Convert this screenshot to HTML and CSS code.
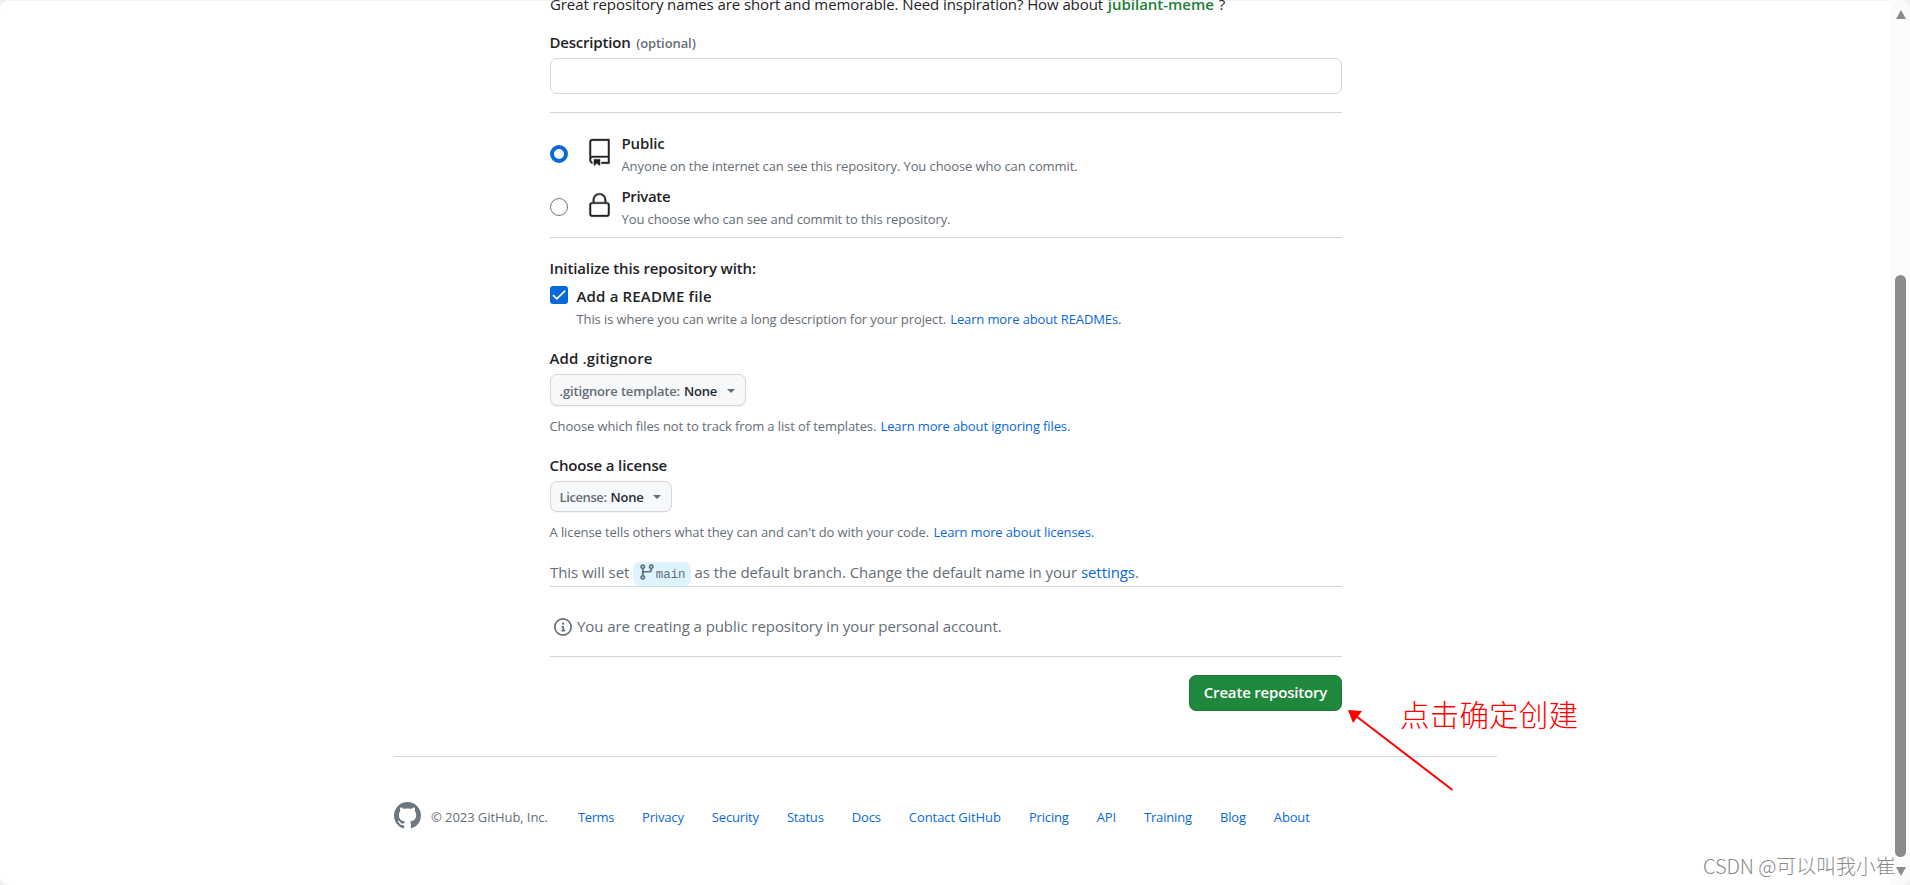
FILE: index.html
```
<!DOCTYPE html>
<html lang="en">
<head>
    <meta charset="UTF-8">
    <title>Create a new repository</title>
    <link rel="stylesheet" href="styles.css">
</head>

<body>
    <div class="page">
        <div class="view">
            <form class="new-repo">
                <p class="hint">Great repository names are short and memorable. Need inspiration? How about <strong class="suggestion">jubilant-meme</strong> ?</p>

                <div class="field">
                    <label class="title" for="description">Description <span class="optional">(optional)</span></label>
                    <input class="text-input" id="description" type="text">
                </div>

                <div class="line line-input"></div>

                <div class="visibility">
                    <label class="option">
                        <input class="radio" type="radio" name="visibility" checked>
                        <svg class="option-icon" width="27" height="27" viewBox="0 0 24 24"><path d="M3 2.75A2.75 2.75 0 0 1 5.75 0h14.5a.75.75 0 0 1 .75.75v20.5a.75.75 0 0 1-.75.75h-6a.75.75 0 0 1 0-1.5h5.25v-4H6A1.5 1.5 0 0 0 4.5 18v.75c0 .716.43 1.334 1.05 1.605a.75.75 0 0 1-.6 1.374A3.251 3.251 0 0 1 3 18.75ZM19.5 1.5H5.75c-.69 0-1.25.56-1.25 1.25v12.651A2.989 2.989 0 0 1 6 15h13.5Z"/><path d="M7 18.25a.25.25 0 0 1 .25-.25h5a.25.25 0 0 1 .25.25v5.01a.25.25 0 0 1-.397.201l-2.206-1.604a.25.25 0 0 0-.294 0L7.397 23.46a.25.25 0 0 1-.397-.2v-5.01Z"/></svg>
                        <span class="option-text">
                            <span class="title">Public</span>
                            <span class="note">Anyone on the internet can see this repository. You choose who can commit.</span>
                        </span>
                    </label>
                    <label class="option">
                        <input class="radio" type="radio" name="visibility">
                        <svg class="option-icon" width="27" height="27" viewBox="0 0 24 24"><path d="M6 9V7.25C6 3.845 8.503 1 12 1s6 2.845 6 6.25V9h.5a2.5 2.5 0 0 1 2.5 2.5v8a2.5 2.5 0 0 1-2.5 2.5h-13A2.5 2.5 0 0 1 3 19.5v-8A2.5 2.5 0 0 1 5.5 9Zm-1.5 2.5v8a1 1 0 0 0 1 1h13a1 1 0 0 0 1-1v-8a1 1 0 0 0-1-1h-13a1 1 0 0 0-1 1Zm3-4.25V9h9V7.25c0-2.67-1.922-4.75-4.5-4.75-2.578 0-4.5 2.08-4.5 4.75Z"/></svg>
                        <span class="option-text">
                            <span class="title title-private">Private</span>
                            <span class="note">You choose who can see and commit to this repository.</span>
                        </span>
                    </label>
                </div>

                <div class="line"></div>

                <div class="init">
                    <h2 class="title">Initialize this repository with:</h2>
                    <label class="readme">
                        <span class="checkbox">
                            <svg width="18" height="18" viewBox="0 0 18 18"><path d="M3 9.2 6.8 12.9 15.2 4.6"/></svg>
                        </span>
                        <span class="readme-text">
                            <span class="title title-readme">Add a README file</span>
                            <span class="note">This is where you can write a long description for your project. <a href="#">Learn more about READMEs.</a></span>
                        </span>
                    </label>
                </div>

                <div class="gitignore">
                    <h2 class="title title-gitignore">Add .gitignore</h2>
                    <button class="select" type="button">.gitignore template: <b>None</b><i class="caret"></i></button>
                    <p class="note">Choose which files not to track from a list of templates. <a href="#">Learn more about ignoring files.</a></p>
                </div>

                <div class="license">
                    <h2 class="title">Choose a license</h2>
                    <button class="select select-license" type="button"><span class="tight">License:</span> <b>None</b><i class="caret"></i></button>
                    <p class="note">A license tells others what they can and can't do with your code. <a href="#">Learn more about licenses.</a></p>
                </div>

                <p class="branch-info">This will set <span class="branch"><svg width="18" height="18" viewBox="0 0 16 16"><path d="M9.5 3.25a2.25 2.25 0 1 1 3 2.122V6A2.5 2.5 0 0 1 10 8.5H6a1 1 0 0 0-1 1v1.128a2.251 2.251 0 1 1-1.5 0V5.372a2.25 2.25 0 1 1 1.5 0v1.836A2.493 2.493 0 0 1 6 7h4a1 1 0 0 0 1-1v-.628A2.25 2.25 0 0 1 9.5 3.25Zm-6 0a.75.75 0 1 0 1.5 0 .75.75 0 0 0-1.5 0Zm8.25-.75a.75.75 0 1 0 0 1.5.75.75 0 0 0 0-1.5ZM4.25 12a.75.75 0 1 0 0 1.5.75.75 0 0 0 0-1.5Z"/></svg>main</span> <span>as the default branch. Change the default name in your <a href="#">settings</a>.</span></p>

                <div class="line"></div>

                <p class="account-info"><svg width="18" height="18" viewBox="0 0 16 16"><path d="M0 8a8 8 0 1 1 16 0A8 8 0 0 1 0 8Zm8-6.5a6.5 6.5 0 1 0 0 13 6.5 6.5 0 0 0 0-13ZM6.5 7.75A.75.75 0 0 1 7.25 7h1a.75.75 0 0 1 .75.75v2.75h.25a.75.75 0 0 1 0 1.5h-2a.75.75 0 0 1 0-1.5h.25v-2h-.25a.75.75 0 0 1-.75-.75ZM8 6a1 1 0 1 1 0-2 1 1 0 0 1 0 2Z"/></svg>You are creating a public repository in your personal account.</p>

                <div class="line"></div>

                <div class="actions">
                    <button class="create" type="button">Create repository</button>
                </div>
            </form>

            <footer class="footer">
                <svg class="logo" width="27" height="27" viewBox="0 0 16 16"><path d="M8 0C3.58 0 0 3.58 0 8c0 3.54 2.29 6.53 5.47 7.59.4.07.55-.17.55-.38 0-.19-.01-.82-.01-1.49-2.01.37-2.53-.49-2.69-.94-.09-.23-.48-.94-.82-1.13-.28-.15-.68-.52-.01-.53.63-.01 1.08.58 1.23.82.72 1.21 1.87.87 2.33.66.07-.52.28-.87.51-1.07-1.78-.2-3.64-.89-3.64-3.95 0-.87.31-1.59.82-2.15-.08-.2-.36-1.02.08-2.12 0 0 .67-.21 2.2.82.64-.18 1.32-.27 2-.27.68 0 1.36.09 2 .27 1.53-1.04 2.2-.82 2.2-.82.44 1.1.16 1.92.08 2.12.51.56.82 1.27.82 2.15 0 3.07-1.87 3.75-3.65 3.95.29.25.54.73.54 1.48 0 1.07-.01 1.93-.01 2.2 0 .21.15.46.55.38A8.01 8.01 0 0 0 16 8c0-4.42-3.58-8-8-8Z"/></svg>
                <span class="copyright">© 2023 GitHub, Inc.</span>
                <nav class="links">
                    <a class="tight" href="#">Terms</a>
                    <a href="#">Privacy</a>
                    <a href="#">Security</a>
                    <a href="#">Status</a>
                    <a href="#">Docs</a>
                    <a class="contact" href="#">Contact GitHub</a>
                    <a href="#">Pricing</a>
                    <a href="#">API</a>
                    <a href="#">Training</a>
                    <a href="#">Blog</a>
                    <a href="#">About</a>
                </nav>
            </footer>
        </div>

        <div class="scrollbar">
            <i class="arrow-up"></i>
            <i class="thumb"></i>
            <i class="arrow-down"></i>
        </div>
    </div>

    <svg class="pointer" width="110" height="90" viewBox="0 0 110 90"><path class="pointer-line" d="M8 6 104.500 80"/><path class="pointer-head" d="M0 0 14 1 5 13Z"/></svg>
    <div class="callout" lang="zh">点击确定创建</div>
    <div class="watermark" lang="zh">CSDN @可以叫我小崔</div>
</body>
</html>
```
FILE: styles.css
```
* {
    box-sizing: border-box;
}

body {
    margin: 0;
    height: 885px;
    overflow: hidden;
    position: relative;
    background: #f0f0f0;
    color: #1f2328;
    font: 15px/24px "Open Sans", "Noto Sans", sans-serif;
    letter-spacing: -0.07px;
    white-space: nowrap;
}

h2,
p {
    margin: 0;
}

a {
    color: #0969da;
    text-decoration: none;
}

svg {
    display: block;
    fill: currentColor;
}

.page {
    display: flex;
    height: 885px;
    overflow: hidden;
    border-radius: 9px;
    background: #fff;
    box-shadow: inset 0 1px 0 #f4f4f4;
}

.view {
    width: 1891px;
    overflow: hidden;
}

/* form */
.new-repo {
    width: 792px;
    margin: -8px 0 0 550px;
}

.hint {
    letter-spacing: -0.09px;
}

.title {
    display: block;
    font-size: 15px;
    font-weight: 600;
    line-height: 24px;
    letter-spacing: -0.13px;
    text-indent: -0.5px;
}

.note {
    display: block;
    color: #656d76;
    font-size: 13px;
    line-height: 22px;
    letter-spacing: -0.1px;
    text-indent: -0.5px;
}

.note a {
    margin-left: 1px;
    letter-spacing: -0.13px;
}

.line {
    height: 1px;
    background: #d0d7de;
}

.suggestion {
    margin: 0 1px;
    color: #1a7f37;
    font-weight: 600;
    letter-spacing: -0.02px;
}

.field {
    margin-top: 14px;
}

.field .title {
    letter-spacing: -0.2px;
}

.optional {
    margin-left: 2px;
    color: #656d76;
    font-size: 13px;
    line-height: 1;
    letter-spacing: -0.09px;
}

.text-input {
    display: block;
    width: 100%;
    height: 36px;
    margin-top: 4px;
    padding: 0 12px;
    border: 1px solid #d0d7de;
    border-radius: 7px;
    background: #fff;
}

.line-input {
    margin-top: 18px;
}

.visibility {
    margin-top: 18px;
}

.option {
    display: flex;
    height: 46px;
    margin-bottom: 7px;
}

.radio {
    appearance: none;
    width: 18px;
    height: 18px;
    margin: 14px 18px 0 0;
    border: 1px solid #6e7781;
    border-radius: 50%;
    background: #fff;
}

.radio:checked {
    border: 4.5px solid #0969da;
}

.option-icon {
    margin: 8px 9px 0 0;
    overflow: visible;
    stroke: currentColor;
    stroke-width: 0.3;
}

.title-private {
    letter-spacing: -0.35px;
}

.init {
    margin-top: 18px;
}

.readme {
    display: flex;
    margin-top: 4px;
}

.checkbox {
    width: 18px;
    height: 18px;
    margin: 2px 9px 0 0;
    border-radius: 3px;
    background: #0969da;
}

.checkbox path {
    fill: none;
    stroke: #fff;
    stroke-width: 1.7;
}

.title-readme {
    letter-spacing: 0.16px;
}

.gitignore {
    margin-top: 16px;
}

.title-gitignore {
    letter-spacing: 0.12px;
}

.select {
    display: flex;
    align-items: center;
    width: 196px;
    height: 32px;
    margin: 4px 0 9px;
    padding: 1px 8.5px 0;
    border: 1px solid #d4d7da;
    border-radius: 7px;
    background: #f6f8fa;
    color: #656d76;
    font: 600 13px/20px "Open Sans", "Noto Sans", sans-serif;
    letter-spacing: -0.15px;
    box-shadow: 0 1px 0 rgba(31, 35, 40, 0.04);
}

.select b {
    margin-left: 4px;
    color: #24292f;
    font-weight: 600;
    letter-spacing: -0.2px;
}

.caret {
    margin-left: 9.5px;
    border: 4.5px solid transparent;
    border-top-color: #656d76;
    border-bottom: 0;
}

.license {
    margin-top: 16px;
}

.select-license {
    width: 122px;
    height: 31px;
}

.tight {
    letter-spacing: -0.4px;
}

.branch-info {
    display: flex;
    height: 26px;
    margin-top: 17px;
    color: #656d76;
    letter-spacing: -0.06px;
}

.branch {
    display: flex;
    height: 24px;
    margin: 2px 4px 0 3.5px;
    padding: 0 5px;
    border-radius: 7px;
    background: #ddf4ff;
    font: 12.4px/27px "Liberation Mono", monospace;
    letter-spacing: 0;
}

.branch svg {
    margin-top: 1px;
}

.account-info {
    display: flex;
    margin: 27px 0 18px;
    padding-left: 4px;
    color: #656d76;
}

.account-info svg {
    margin: 4px 5px 0 0;
}

.actions {
    display: flex;
    justify-content: flex-end;
    margin-top: 18px;
}

.create {
    width: 153px;
    height: 36px;
    padding: 0 0 2px;
    border: 1px solid #1c7b37;
    border-radius: 7px;
    background: #1f883d;
    color: #fff;
    font: 600 15px/24px "Open Sans", "Noto Sans", sans-serif;
    letter-spacing: -0.18px;
}

/* footer */
.footer {
    display: flex;
    width: 1103px;
    height: 100px;
    margin: 45px 0 0 394px;
    padding-top: 45px;
    border-top: 1px solid #d0d7de;
    color: #656d76;
    font-size: 13px;
    line-height: 20px;
}

.logo {
    color: #6e7781;
}

.copyright {
    width: 147px;
    margin: 5px 0 0 10px;
}

.links {
    display: flex;
    gap: 28px;
    margin-top: 5px;
    letter-spacing: -0.16px;
}

.contact {
    letter-spacing: -0.06px;
}

/* browser scrollbar */
.scrollbar {
    display: flex;
    flex-direction: column;
    align-items: center;
    width: 19px;
    padding: 10px 0 8px;
    background: #fbfbfb;
}

.thumb {
    width: 11px;
    height: 582px;
    margin: 256px 0 10px;
    border-radius: 6px;
    background: #8b8b8b;
}

.arrow-up,
.arrow-down {
    border: 5.5px solid transparent;
}

.arrow-up {
    border-top: 0;
    border-bottom: 9px solid #8b8b8b;
}

.arrow-down {
    border-top: 9px solid #8b8b8b;
    border-bottom: 0;
}

/* annotations over the page */
.pointer {
    position: absolute;
    left: 1348px;
    top: 710px;
}

.pointer-line {
    fill: none;
    stroke: #f00;
    stroke-width: 2;
}

.pointer-head {
    fill: #f00;
}

.callout {
    position: absolute;
    left: 1400px;
    top: 692px;
    color: #f00;
    font: 300 29.6px/44px "Noto Sans CJK SC", sans-serif;
    letter-spacing: 0.1px;
}

.watermark {
    position: absolute;
    left: 1703px;
    top: 851px;
    color: #8c8c8c;
    font: 300 20px/30px "Noto Sans CJK SC", sans-serif;
    letter-spacing: -0.1px;
}
```
